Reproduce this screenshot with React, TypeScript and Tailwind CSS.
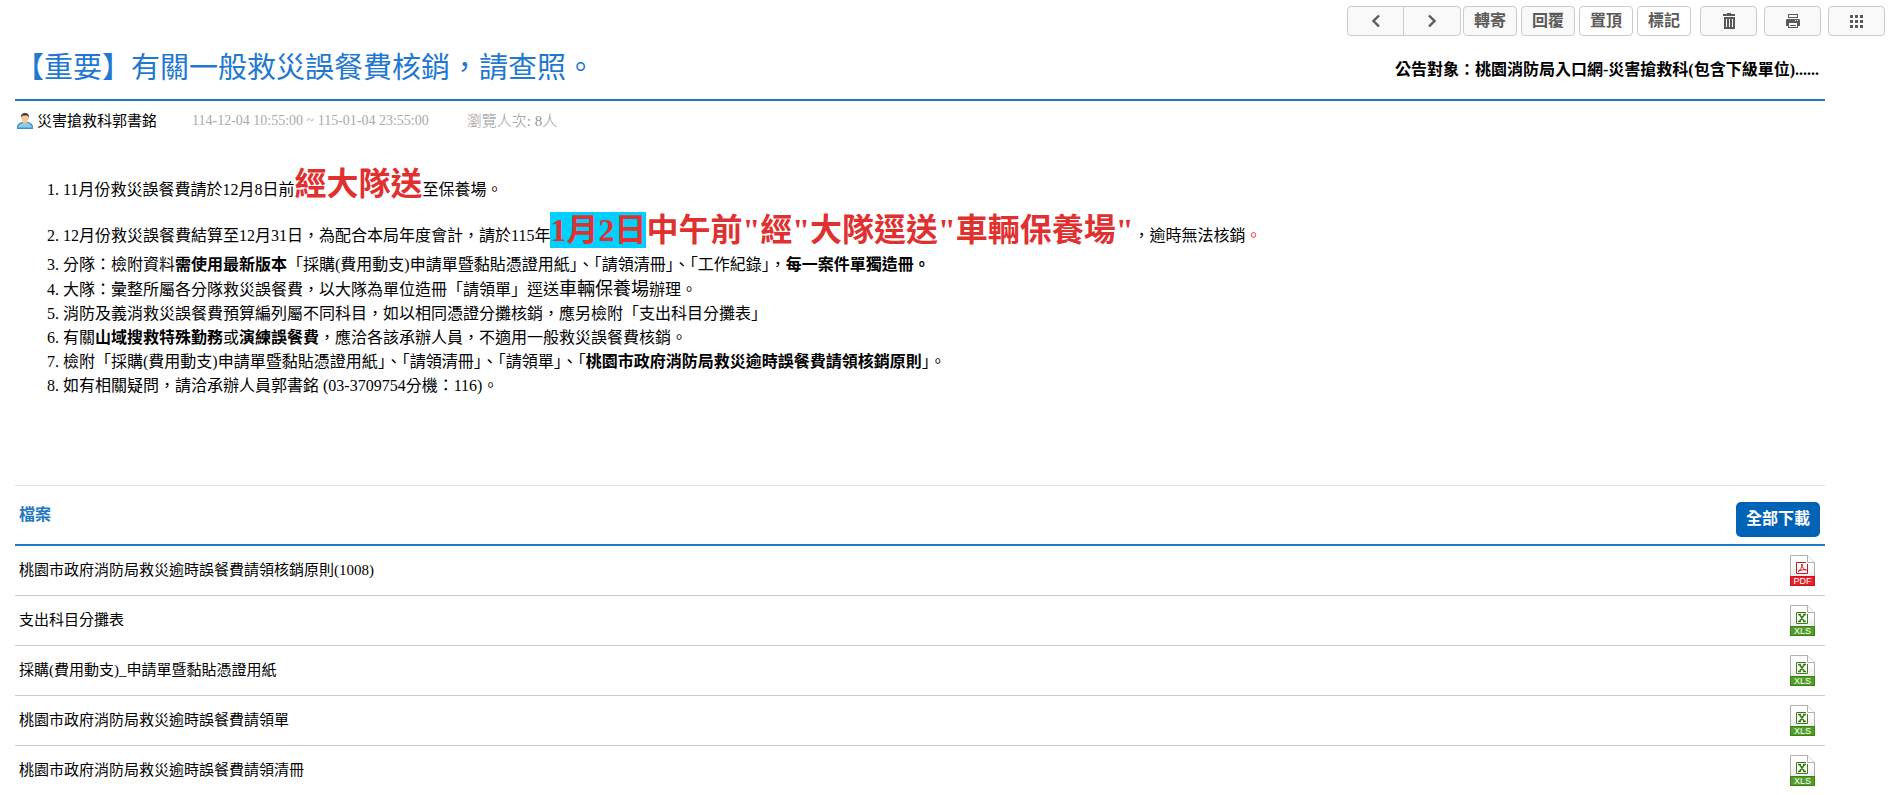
import React from 'react';

const SERIF = "font-['Liberation_Serif','Noto_Sans_CJK_TC',serif]";

const toolButton =
  'flex h-[30px] items-center justify-center rounded-sm border border-[#ccc] text-base font-bold text-[#5a5a5a]';

const files = [
  { name: '桃園市政府消防局救災逾時誤餐費請領核銷原則(1008)', type: 'PDF' },
  { name: '支出科目分攤表', type: 'XLS' },
  { name: '採購(費用動支)_申請單暨黏貼憑證用紙', type: 'XLS' },
  { name: '桃園市政府消防局救災逾時誤餐費請領單', type: 'XLS' },
  { name: '桃園市政府消防局救災逾時誤餐費請領清冊', type: 'XLS' },
];

const ChevronIcon: React.FC<{ next?: boolean }> = ({ next }) => (
  <svg width="16" height="16" viewBox="0 0 16 16" fill="none" stroke="#5a5a5a" strokeWidth="2.4">
    <path d={next ? 'M5 2.5l5.5 5.5L5 13.5' : 'M11 2.5L5.5 8l5.5 5.5'} />
  </svg>
);

const TrashIcon: React.FC = () => (
  <svg width="14" height="16" viewBox="0 0 14 16" fill="#5a5a5a">
    <path d="M5 0h4v1h4v2H1V1h4z" />
    <path fillRule="evenodd" d="M2 4h11v12H2zM4 6v8h1V6zm3 0v8h1V6zm3 0v8h1V6z" />
  </svg>
);

const PrintIcon: React.FC = () => (
  <svg width="14" height="15" viewBox="0 0 14 15" fill="#5a5a5a">
    <path fillRule="evenodd" d="M2 0h10v4H2zM3 1v2h8V1z" />
    <path fillRule="evenodd" d="M1 5h12l1 1v6h-2v2H2v-2H0V6zM3 9v4h8V9zM9 6v1h1V6zm2 0v1h1V6z" />
    <path d="M4 11h6v1H4z" />
  </svg>
);

const GridIcon: React.FC = () => (
  <svg width="13" height="13" viewBox="0 0 13 13" fill="#5a5a5a">
    {[0, 5, 10].map((y) =>
      [0, 5, 10].map((x) => <rect key={`${x}-${y}`} x={x} y={y} width="3" height="3" />)
    )}
  </svg>
);

const UserIcon: React.FC = () => (
  <svg width="16" height="16" viewBox="0 0 16 16">
    <path d="M0 16v-2c0-3 3-4.500 5-5h6c2 .5 5 2 5 5v2z" fill="#3d94c9" />
    <path d="M1 14.500c1-3 3-4.500 5-4.500h4c2 0 4 1.500 5 4.500z" fill="#8ccbe8" />
    <path d="M6 8h4v2l-2 2-2-2z" fill="#e8b98c" />
    <ellipse cx="8" cy="5" rx="3.500" ry="4.200" fill="#f3c99c" />
    <path d="M4 5C3.500 1.500 5.500 0 8 0s4.500 1.500 4 5c-.5-2-1.500-2.500-4-2.500S4.500 3 4 5z" fill="#4b3a2c" />
  </svg>
);

const FileIcon: React.FC<{ type: string }> = ({ type }) => {
  const pdf = type === 'PDF';
  const color = pdf ? '#c4161c' : '#3c7d1c';
  return (
    <svg width="25" height="31" viewBox="0 0 25 31" role="img" aria-label={type}>
      <defs>
        <linearGradient id={`paper-${type}`} x1="0" y1="0" x2="0" y2="1">
          <stop offset="0.3" stopColor="#fff" />
          <stop offset="1" stopColor="#ddd" />
        </linearGradient>
      </defs>
      <path d="M.5 30V.5h17l7 7V30z" fill={`url(#paper-${type})`} stroke="#b0b0b0" />
      <path d="M17.500 .5v7h7" fill="#fff" stroke="#b0b0b0" />
      <path d="M16 7.500H6.500v11h11V9" fill="#fff" stroke={color} />
      {pdf ? (
        <path d="M8 16.500c2-1 4-4 4-7.500 0 3.500 2 6 4.500 6-3-.8-6 0-8.500 1.500z" fill="none" stroke={color} />
      ) : (
        <path d="M9.500 9.500l5 7M14.500 9.500l-5 7M8 9.500h3M13 9.500h3M8 16.500h3M13 16.500h3" stroke={color} strokeWidth="1.6" />
      )}
      <rect x="0.500" y="21.500" width="24" height="9" fill={pdf ? '#e5202a' : '#4f9e26'} stroke={color} />
      <text
        x="12.500"
        y="29"
        fill="#fff"
        fontSize="9"
        textAnchor="middle"
        fontFamily="Liberation Sans, sans-serif"
      >
        {type}
      </text>
    </svg>
  );
};

const Toolbar: React.FC = () => (
  <div className="flex justify-end pt-1.5 pr-[3px]">
    <div className="mr-0.5 flex">
      <button type="button" aria-label="上一則" className={`${toolButton} w-[57px] rounded-r-none bg-[#f9f9f9]`}>
        <ChevronIcon />
      </button>
      <button type="button" aria-label="下一則" className={`${toolButton} -ml-px w-[58px] rounded-l-none bg-[#f9f9f9]`}>
        <ChevronIcon next />
      </button>
    </div>
    <div className="flex gap-1">
      <button type="button" className={`${toolButton} w-[54px] bg-[#f9f9f9]`}>轉寄</button>
      <button type="button" className={`${toolButton} w-[54px] bg-[#f9f9f9]`}>回覆</button>
      <button type="button" className={`${toolButton} w-[54px] bg-white`}>置頂</button>
      <button type="button" className={`${toolButton} w-[54px] bg-white`}>標記</button>
    </div>
    <div className="ml-[9px] flex gap-[7px]">
      <button type="button" aria-label="刪除" className={`${toolButton} w-[57px] bg-[#f9f9f9]`}>
        <TrashIcon />
      </button>
      <button type="button" aria-label="列印" className={`${toolButton} w-[57px] bg-[#f9f9f9]`}>
        <PrintIcon />
      </button>
      <button type="button" aria-label="更多" className={`${toolButton} w-[57px] bg-[#f9f9f9]`}>
        <GridIcon />
      </button>
    </div>
  </div>
);

const Article: React.FC = () => (
  <ol className="list-decimal pt-5 pl-12 text-base leading-6">
    <li>
      11月份救災誤餐費請於12月8日前
      <strong className="text-[32px] leading-[46px] text-[#e03131]">經大隊送</strong>
      至保養場。
    </li>
    <li>
      12月份救災誤餐費結算至12月31日，為配合本局年度會計，請於115年
      <strong className="text-[32px] leading-[46px] text-[#e03131]">
        <span className="bg-[#00d0ff]">1月2日</span>中午前"經"大隊逕送"車輛保養場"
      </strong>
      ，逾時無法核銷<span className="text-[#e03131]">。</span>
    </li>
    <li>
      分隊：檢附資料<strong>需使用最新版本</strong>
      「採購(費用動支)申請單暨黏貼憑證用紙」、「請領清冊」、「工作紀錄」，<strong>每一案件單獨造冊。</strong>
    </li>
    <li>
      大隊：彙整所屬各分隊救災誤餐費，以大隊為單位造冊「請領單」逕送<span className="text-lg leading-6">車輛保養場</span>辦理。
    </li>
    <li>消防及義消救災誤餐費預算編列屬不同科目，如以相同憑證分攤核銷，應另檢附「支出科目分攤表」</li>
    <li>
      有關<strong>山域搜救特殊勤務</strong>或<strong>演練誤餐費</strong>，應洽各該承辦人員，不適用一般救災誤餐費核銷。
    </li>
    <li>
      檢附「採購(費用動支)申請單暨黏貼憑證用紙」、「請領清冊」、「請領單」、「<strong>桃園市政府消防局救災逾時誤餐費請領核銷原則</strong>」。
    </li>
    <li>如有相關疑問，請洽承辦人員郭書銘 (03-3709754分機：116)。</li>
  </ol>
);

const FileList: React.FC = () => (
  <section className="mt-[87px] border-t border-[#e0e0e0]">
    <div className="flex h-[60px] items-center justify-between border-b-2 border-[#2577c2] pr-[5px] pl-1">
      <h2 className="text-base font-bold text-[#2577c2]">檔案</h2>
      <button type="button" className="mt-2 h-[35px] w-[84px] rounded-[5px] bg-[#0063b5] text-base font-bold text-white">
        全部下載
      </button>
    </div>
    <ul>
      {files.map((file) => (
        <li key={file.name} className="flex h-[50px] items-center justify-between border-b border-[#ccc] pr-2.5 pl-1">
          <a href="#" className="text-[15px]">{file.name}</a>
          <a href="#" aria-label={`下載 ${file.name}`}>
            <FileIcon type={file.type} />
          </a>
        </li>
      ))}
    </ul>
  </section>
);

const App: React.FC = () => {
  return (
    <div lang="zh-TW" className={`${SERIF} bg-white text-black`}>
      <Toolbar />
      <main className="mr-[63px] ml-[15px]">
        <header className="flex h-[65px] items-center justify-between border-b-2 border-[#2577c2]">
          <h1 className="text-[29px] leading-10 font-normal text-[#1f78d1]">【重要】有關一般救災誤餐費核銷，請查照。</h1>
          <p className="mt-1 pr-1.5 text-base font-bold">公告對象：桃園消防局入口網-災害搶救科(包含下級單位)......</p>
        </header>
        <div className="flex h-10 items-center pl-0.5 text-[15px]">
          <UserIcon />
          <span className="ml-1">災害搶救科郭書銘</span>
          <span className="ml-[35px] text-sm text-[#aaa]">114-12-04 10:55:00 ~ 115-01-04 23:55:00</span>
          <span className="ml-[38px] font-light text-[#999]">瀏覽人次: 8人</span>
        </div>
        <Article />
        <FileList />
      </main>
    </div>
  );
};

export default App;
